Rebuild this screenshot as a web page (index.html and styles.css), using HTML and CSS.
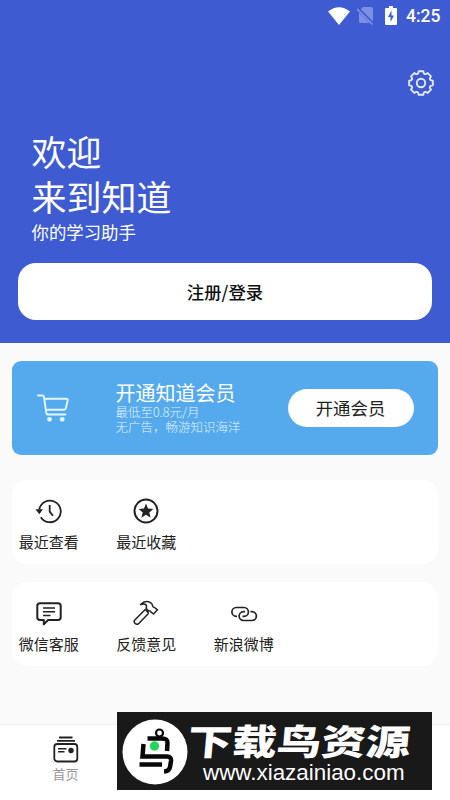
FILE: index.html
```html
<!DOCTYPE html>
<html lang="zh-CN">
<head>
<meta charset="utf-8">
<title>知道</title>
<link rel="stylesheet" href="styles.css">
</head>
<body>
<div class="screen">
  <header class="hero">
    <div class="status">
      <svg class="wifi" viewBox="0 0 22 18"><path d="M0 4.500Q11-4 22 4.500L11 18Z" fill="#fff"/></svg>
      <svg class="sim" viewBox="0 0 18 19"><path d="M6 1H14.500Q16 1 16 2.500V17H3.500Q2 17 2 15.500V5Z" fill="#7b90e3"/><path d="M0 2L16.500 18.500" stroke="#3e5bd2" stroke-width="3.500"/><path d="M0 3L15.500 18.500" stroke="#8799e5" stroke-width="1.400"/></svg>
      <svg class="battery" viewBox="0 0 12 19"><path d="M4 0H8V2H11Q12 2 12 3V18Q12 19 11 19H1Q0 19 0 18V3Q0 2 1 2H4Z" fill="#fff"/><path d="M6.500 4.500L3 11H5.500V16L9 9.500H6.500Z" fill="#3e5bd2"/></svg>
      <span class="clock">4:25</span>
    </div>
    <div class="tools">
      <svg class="gear" viewBox="-13 -13 26 26"><path d="M11.800-2.300V2.300Q7 2.900 9.950 6.700L6.700 9.950Q2.900 7 2.300 11.800H-2.300Q-2.900 7-6.700 9.950L-9.950 6.700Q-7 2.900-11.800 2.300V-2.300Q-7-2.900-9.950-6.700L-6.700-9.950Q-2.900-7-2.300-11.800H2.300Q2.900-7 6.700-9.950L9.950-6.700Q7-2.900 11.800-2.300Z"/><circle r="4.200"/></svg>
    </div>
    <h1 class="welcome">欢迎<br>来到知道</h1>
    <p class="tagline">你的学习助手</p>
    <a class="login">注册/登录</a>
  </header>
  <main class="content">
    <section class="vip">
      <svg class="cart" viewBox="0 0 32 28"><path d="M1 1.500H5.500Q6.700 1.500 7 3L9.200 18.500Q9.500 20.500 11 20.500H28.500M7.500 4.800H29.500Q31 4.800 30.700 6.500L29 13.500Q28.700 15.800 27 15.800H8.800"/><circle cx="12.500" cy="25.300" r="2.400"/><circle cx="25.200" cy="25.300" r="2.400"/></svg>
      <div class="vip-text">
        <h2>开通知道会员</h2>
        <p>最低至0.8元/月</p>
        <p>无广告，畅游知识海洋</p>
      </div>
      <a class="vip-button">开通会员</a>
    </section>
    <section class="card">
      <div class="item">
        <svg class="icon" viewBox="0 0 28 28"><path d="M4.300 12.500A10.800 10.800 0 1 1 5.800 20.200M14.700 8V14.600L18 18.800" stroke-width="1.800"/><path d="M.5 12.200H8L4.300 17.200Z" fill="#222" stroke="none"/></svg>
        <span>最近查看</span>
      </div>
      <div class="item">
        <svg class="icon" viewBox="0 0 28 28"><circle cx="14" cy="14" r="11.500" stroke-width="2"/><path d="M14 6.500L16 11.500L21.300 12L17.300 15.500L18.600 20.700L14 17.800L9.400 20.700L10.700 15.500L6.700 12L12 11.500Z" fill="#222" stroke="none"/></svg>
        <span>最近收藏</span>
      </div>
    </section>
    <section class="card">
      <div class="item">
        <svg class="icon" viewBox="0 0 28 28"><path d="M5 4.300H23Q25.700 4.300 25.700 7V18.200Q25.700 21 23 21H13L8.800 25.400V21H5Q2.300 21 2.300 18.200V7Q2.300 4.300 5 4.300Z" stroke-width="2"/><path d="M8 9H20M8 12.700H20M8 16.400H15.500"/></svg>
        <span>微信客服</span>
      </div>
      <div class="item">
        <svg class="icon" viewBox="0 0 28 28"><path d="M13.200 10.500L2.600 21.200Q1.400 22.700 3 24.300T6.300 24.900L16.700 14.200M8.500 5.500Q13.500.8 18.500 3.700Q20.500 5 20.800 7.300Q20.800 8.300 22.500 8.500L25.500 10.800L21.500 15L19 13.200Q18.800 11.700 16.800 12L14 9.300Q15.500 6.200 13 5.200Q11.400 4.600 8.500 5.500ZM13.200 10.500L16.700 14.200"/></svg>
        <span>反馈意见</span>
      </div>
      <div class="item">
        <svg class="icon" viewBox="0 0 28 28"><path d="M7 17.300H6.300A4.400 4.400 0 0 1 6.300 8.500H14A4.400 4.400 0 0 1 14 17.300H12.500M20.500 12.700H22A4.400 4.400 0 0 1 22 21.500H13.500A4.400 4.400 0 0 1 13.500 12.700H15" stroke-width="1.700"/></svg>
        <span>新浪微博</span>
      </div>
    </section>
  </main>
  <nav class="tabs">
    <div class="tab">
      <svg class="tab-icon" viewBox="0 0 26 27"><path d="M6 1.500H19.500M4 4.800H22" stroke-width="1.800"/><rect x="1.300" y="8" width="23" height="17.500" rx="3" stroke-width="1.800"/><path d="M5 12.800H13.500M5 15.800H11.500" stroke-width="1.500"/><circle cx="18" cy="14.500" r="2.700" fill="#222" stroke="none"/></svg>
      <span>首页</span>
    </div>
  </nav>
  <aside class="banner">
    <svg class="bird" viewBox="0 0 66 66"><circle cx="33" cy="33" r="32.500" fill="#fff"/><g fill="none" stroke="#080808" stroke-width="4.500"><circle cx="37.500" cy="14" r="3.500" stroke-width="2.200"/><path d="M25.500 19.500H40Q46 19.500 45.500 24L45 32"/><path d="M21.500 25L20.500 37.500H45Q49.500 37.500 49 42L48 48Q47 52.500 42 52.500"/><path d="M17.500 45.500H40"/></g><circle cx="32.500" cy="27" r="4.700" fill="#1fd85a"/></svg>
    <div class="banner-text">
      <strong>下载鸟资源</strong>
      <span>www.xiazainiao.com</span>
    </div>
  </aside>
</div>
</body>
</html>
```
FILE: styles.css
```css
* { box-sizing: border-box; margin: 0; padding: 0; }
body {
  font-family: "Noto Sans CJK SC", sans-serif;
  background: #fff;
  color: #222;
}
.screen {
  position: relative;
  display: flex;
  flex-direction: column;
  width: 450px;
  height: 800px;
  overflow: hidden;
}
svg { display: block; flex: none; }
.hero {
  height: 343px;
  background: #3e5bd2;
  color: #fff;
}
.status {
  display: flex;
  justify-content: flex-end;
  align-items: center;
  height: 31px;
  padding-right: 10px;
}
.wifi { width: 22px; height: 18px; margin-right: 7px; }
.sim { width: 18px; height: 19px; margin-right: 10px; }
.battery { width: 12px; height: 19px; margin-right: 9px; }
.clock { font: 500 17.500px/31px Roboto, sans-serif; width: 34px; padding-top: 1px; white-space: nowrap; }
.tools {
  display: flex;
  justify-content: flex-end;
  padding: 39px 16px 0 0;
}
.gear { width: 26px; height: 26px; fill: none; stroke: #e6ebff; stroke-width: 1.900; stroke-linejoin: round; }
.welcome {
  margin: 32px 0 0 31.500px;
  font-size: 35px;
  font-weight: 400;
  line-height: 45px;
}
.tagline {
  margin: 1px 0 0 31.500px;
  font-size: 17.400px;
  line-height: 26px;
}
.login {
  display: flex;
  justify-content: center;
  align-items: center;
  height: 57px;
  margin: 18px 18px 0;
  border-radius: 18px;
  background: #fff;
  color: #111;
  font-size: 17.400px;
  font-weight: 500;
}
.content {
  display: flex;
  flex-direction: column;
  height: 381px;
  padding: 18px 12px 0;
  background: #fafafa;
}
.vip {
  display: flex;
  align-items: center;
  height: 94px;
  margin-bottom: 25px;
  padding: 0 24px 0 25px;
  border-radius: 9px;
  background: #54aaed;
  color: #fff;
}
.cart { width: 32px; height: 28px; fill: none; stroke: #e2f6ff; stroke-width: 1.900; stroke-linecap: round; }
.cart circle { fill: #e2f6ff; stroke: none; }
.vip-text { width: 172px; margin: -2px 0 0 46.500px; white-space: nowrap; }
.vip-text h2 { font-size: 20px; font-weight: 400; line-height: 23px; }
.vip-text p { color: #e2f3ff; font-size: 12.500px; font-weight: 300; line-height: 15px; }
.vip-button {
  width: 126px;
  height: 38px;
  border-radius: 19px;
  background: #fff;
  color: #222;
  font-size: 17.400px;
  line-height: 38px;
  text-align: center;
}
.card {
  display: flex;
  height: 84px;
  margin-bottom: 18px;
  padding-left: .500px;
  border-radius: 15px;
  background: #fff;
}
.item {
  display: flex;
  flex-direction: column;
  align-items: center;
  width: 97.500px;
  padding: 17px 25px 0 0;
  white-space: nowrap;
  font-size: 15px;
  line-height: 22px;
}
.icon { width: 28px; height: 28px; margin-bottom: 6px; fill: none; stroke: #222; stroke-width: 1.500; stroke-linejoin: round; }
.tabs { height: 76px; border-top: 1px solid #f1f1f1; background: #fff; }
.tab {
  display: flex;
  flex-direction: column;
  align-items: center;
  width: 131px;
  padding-top: 11px;
  color: #999;
  font-size: 13px;
  line-height: 20px;
}
.tab-icon { width: 26px; height: 27px; margin-bottom: 1px; fill: none; stroke: #222; }
.banner {
  position: absolute;
  left: 117px;
  top: 712px;
  display: flex;
  align-items: center;
  width: 315px;
  height: 78px;
  padding: 2px 0 0 5px;
  background: #191919;
  color: #fff;
}
.bird { width: 66px; height: 66px; }
.banner-text { width: 230px; white-space: nowrap; }
.banner-text strong {
  display: block;
  font-size: 44.500px;
  font-weight: 900;
  line-height: 36px;
  transform: translateY(3px) skewX(-5deg) scaleY(.8);
}
.banner-text span {
  display: block;
  margin: 6px 0 0 15px;
  font: 22.400px/24px "Liberation Sans", sans-serif;
}
```
